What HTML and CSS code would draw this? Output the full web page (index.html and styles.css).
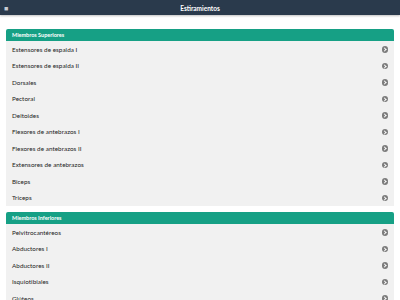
FILE: index.html
```html
<!DOCTYPE html>
<html lang="es">
<head>
    <meta charset="UTF-8">
    <title>Estiramientos</title>
    <link rel="stylesheet" href="styles.css">
</head>
<body>
<div class="topbar">
    <span class="menu">&#9632;</span>
    <span class="title">Estiramientos</span>
</div>
<div class="content">
    <div class="card">
        <div class="card-head">Miembros Superiores</div>
        <ul class="list">
            <li><span>Estensores de espalda I</span><i class="go"></i></li>
            <li><span>Estensores de espalda II</span><i class="go"></i></li>
            <li><span>Dorsales</span><i class="go"></i></li>
            <li><span>Pectoral</span><i class="go"></i></li>
            <li><span>Deltoides</span><i class="go"></i></li>
            <li><span>Flexores de antebrazos I</span><i class="go"></i></li>
            <li><span>Flexores de antebrazos II</span><i class="go"></i></li>
            <li><span>Extensores de antebrazos</span><i class="go"></i></li>
            <li><span>Biceps</span><i class="go"></i></li>
            <li><span>Triceps</span><i class="go"></i></li>
        </ul>
    </div>
    <div class="card">
        <div class="card-head">Miembros Inferiores</div>
        <ul class="list">
            <li><span>Pelvitrocantéreos</span><i class="go"></i></li>
            <li><span>Abductores I</span><i class="go"></i></li>
            <li><span>Abductores II</span><i class="go"></i></li>
            <li><span>Isquiotibiales</span><i class="go"></i></li>
            <li><span>Glúteos</span><i class="go"></i></li>
        </ul>
    </div>
</div>
</body>
</html>
```
FILE: styles.css
```css
*{ padding: 0; margin: 0; box-sizing: border-box;}
body{
    background: #fff;
    font-family: Lato, "Noto Sans", sans-serif;
    color: #222;
}
.topbar{
    height: 15px;
    background: #2a3a4c;
    color: #fff;
    display: flex;
    align-items: center;
    justify-content: center;
    position: relative;
    box-shadow: 0 1px 2px rgba(0,0,0,.25);
}
.topbar .title{
    font-size: 6.5px;
    font-weight: bold;
    padding-top: 1px;
}
.menu{
    position: absolute;
    left: 4px;
    top: 4px;
    font-size: 7px;
    color: #c8ccd4;
}
.content{
    padding: 14px 6px 0;
}
.card{
    margin-bottom: 6px;
}
.card-head{
    height: 12px;
    background: #16a085;
    color: #fff;
    font-size: 5.5px;
    font-weight: bold;
    padding-left: 6px;
    display: flex;
    align-items: center;
    border-radius: 2px 2px 0 0;
}
.list{
    list-style: none;
    background: #f1f1f1;
}
.list li{
    height: 16.5px;
    display: flex;
    align-items: center;
    justify-content: space-between;
    padding: 0 6px 0 6px;
    font-size: 6.3px;
    letter-spacing: 0.05px;
}
.go{
    width: 6.5px;
    height: 6.5px;
    border-radius: 50%;
    background: #7c7c7c;
    position: relative;
}
.go:after{
    content: "";
    position: absolute;
    left: 1.4px;
    top: 2px;
    width: 2px;
    height: 2px;
    border-top: 1px solid #fff;
    border-right: 1px solid #fff;
    transform: rotate(45deg);
}
```
